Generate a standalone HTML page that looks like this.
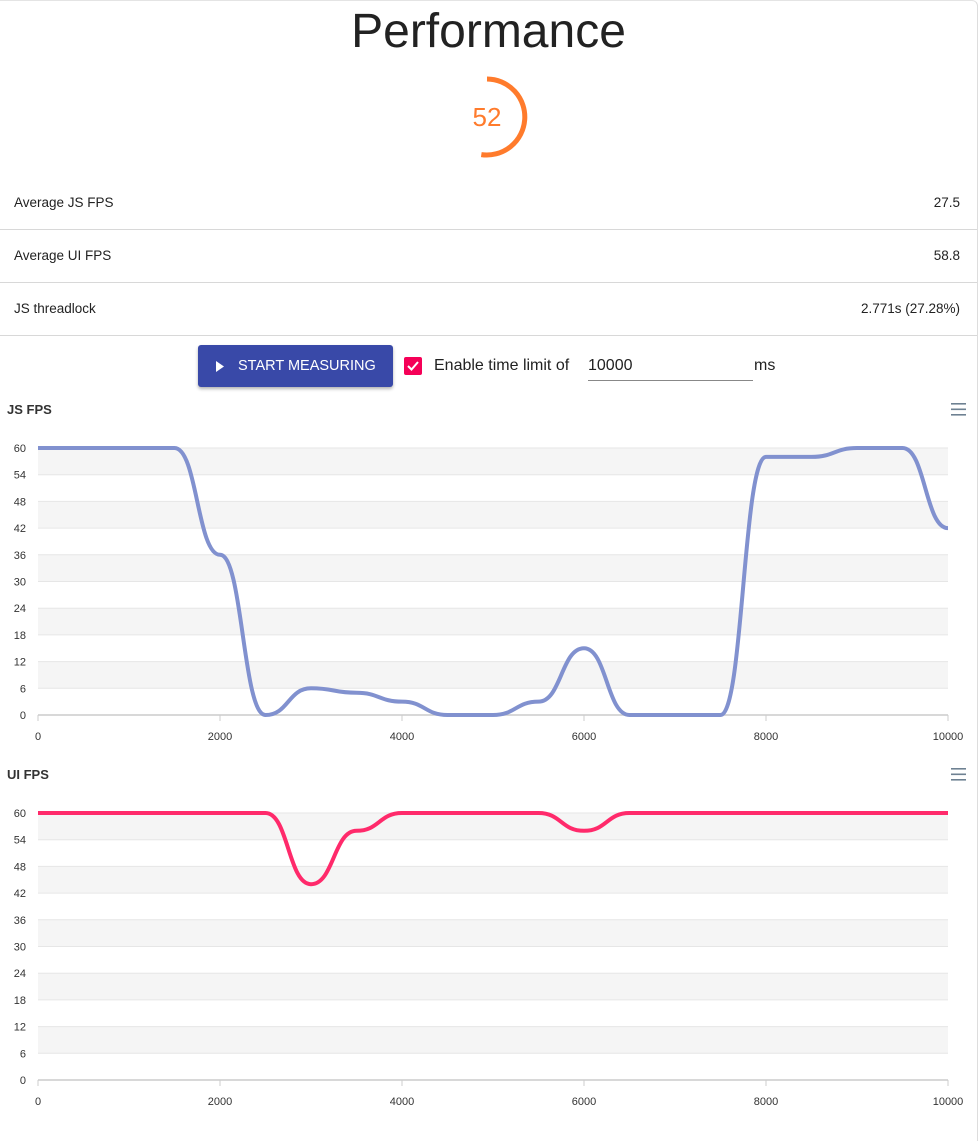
<!DOCTYPE html>
<html><head><meta charset="utf-8">
<style>
body{margin:0;width:980px;height:1127px;overflow:hidden;background:#fff;font-family:"Liberation Sans",Arial,sans-serif;color:#222;position:relative}
.card{position:absolute;left:0;top:0;width:977px;height:1140px;border-right:1px solid #ddd;border-top:1px solid #e4e4e4;border-radius:0 6px 0 0}
.title{position:absolute;left:0;width:977px;top:3px;text-align:center;font-size:48px;line-height:58px;color:#222}
.row{position:absolute;left:0;width:977px;height:53px;border-bottom:1px solid #d8d8d8;font-size:13.5px}
.row span{position:absolute;top:19px}
.btn{position:absolute;left:198px;top:345px;width:195px;height:42px;background:#3949a8;border-radius:3px;box-shadow:0 2px 3px rgba(0,0,0,.3);color:#fff;font-size:14.5px;line-height:43px}
.cb{position:absolute;left:404px;top:357px;width:18px;height:18px;background:#f50057;border-radius:2px}
.lbl{position:absolute;font-size:16px;color:#222}
.inp{position:absolute;left:588px;top:355px;width:165px;height:25px;border-bottom:1px solid #888;font-size:16px;line-height:22px}
.ch{position:absolute;font-weight:bold;font-size:13px;color:#333}
svg text{font-family:"Liberation Sans",Arial,sans-serif}
</style></head><body>
<div class="card"></div>
<div class="title">Performance</div>
<svg style="position:absolute;left:0;top:0" width="980" height="200">
<path d="M487 79 A38 38 0 1 1 481.3 154.6" fill="none" stroke="#ff7b2c" stroke-width="5"/>
<text x="487" y="126" font-size="26" fill="#ff7b2c" text-anchor="middle">52</text>
</svg>
<div class="row" style="top:176px"><span style="left:14px">Average JS FPS</span><span style="right:17px">27.5</span></div>
<div class="row" style="top:229px"><span style="left:14px">Average UI FPS</span><span style="right:17px">58.8</span></div>
<div class="row" style="top:282px"><span style="left:14px">JS threadlock</span><span style="right:17px">2.771s (27.28%)</span></div>
<div class="btn"><svg style="position:absolute;left:18px;top:16px" width="9" height="11"><path d="M0 0L8 5.5L0 11Z" fill="#fff"/></svg><span style="position:absolute;left:40px">START MEASURING</span></div>
<div class="cb"><svg width="18" height="18"><path d="M4 9L7.5 12.5L14 5" stroke="#fff" stroke-width="2" fill="none"/></svg></div>
<div class="lbl" style="left:434px;top:357px">Enable time limit of</div>
<div class="inp">10000</div>
<div class="lbl" style="left:754px;top:357px">ms</div>
<div class="ch" style="left:7px;top:402px">JS FPS</div>
<div class="ch" style="left:7px;top:767px">UI FPS</div>
<svg id="s" style="position:absolute;left:0;top:0" width="980" height="1127"></svg>
<script>
var s='';
function ham(y){for(var i=0;i<3;i++)s+='<rect x="951" y="'+(y+i*5.5)+'" width="15" height="1.6" fill="#6e8192"/>';}
ham(403);ham(768);
function chart(top,data,color){
 var bot=top+267,h=267/10;
 for(var i=0;i<10;i+=2)s+='<rect x="38" y="'+(top+i*h)+'" width="910" height="'+h+'" fill="#f5f5f5"/>';
 for(var i=0;i<=10;i++){var y=top+i*h;s+='<line x1="38" x2="948" y1="'+y+'" y2="'+y+'" stroke="#e6e6e6"/>';
  s+='<text x="26" y="'+(y+4)+'" font-size="11" fill="#333" text-anchor="end">'+(60-i*6)+'</text>';}
 s+='<line x1="38" x2="948" y1="'+bot+'" y2="'+bot+'" stroke="#ccc" stroke-width="1.5"/>';
 for(var t=0;t<=10000;t+=2000){var x=38+t*0.091;s+='<line x1="'+x+'" x2="'+x+'" y1="'+bot+'" y2="'+(bot+6)+'" stroke="#ccc"/>';
  s+='<text x="'+x+'" y="'+(bot+25)+'" font-size="11" fill="#333" text-anchor="middle">'+t+'</text>';}
 var p='';
 for(var i=0;i<data.length;i++){var x=38+data[i][0]*0.091,y=bot-data[i][1]*4.45;
  if(i==0)p='M'+x+' '+y;else{var px=38+data[i-1][0]*0.091,py=bot-data[i-1][1]*4.45,m=(px+x)/2;p+=' C'+m+' '+py+' '+m+' '+y+' '+x+' '+y;}}
 s+='<path d="'+p+'" fill="none" stroke="'+color+'" stroke-width="4" stroke-linejoin="round"/>';
}
chart(448,[[0,60],[1500,60],[2000,36],[2500,0],[3000,6],[3500,5],[4000,3],[4500,0],[5000,0],[5500,3],[6000,15],[6500,0],[7500,0],[8000,58],[8500,58],[9000,60],[9500,60],[10000,42]],'#8191cf');
chart(813,[[0,60],[2500,60],[3000,44],[3500,56],[4000,60],[5500,60],[6000,56],[6500,60],[10000,60]],'#ff2a6b');
document.getElementById('s').innerHTML=s;
</script>
</body></html>
